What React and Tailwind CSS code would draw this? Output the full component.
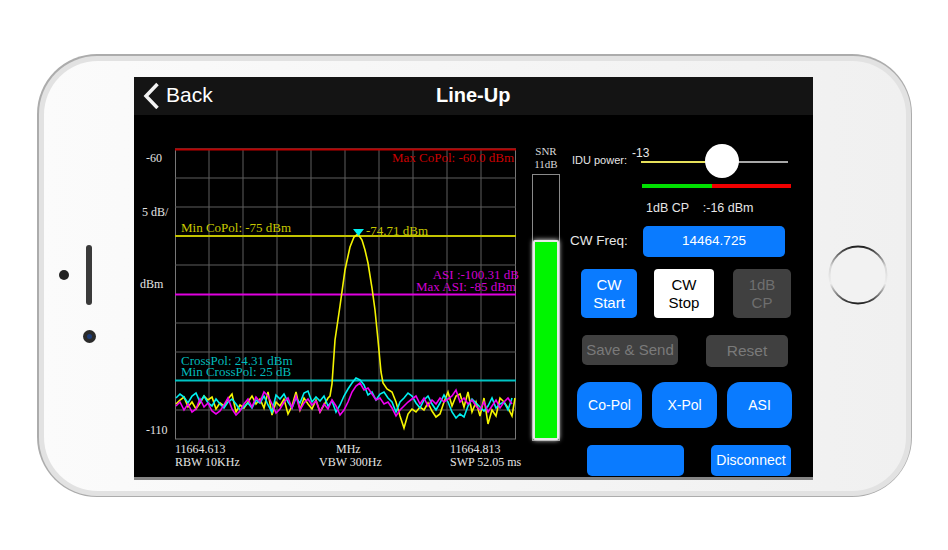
const cyanY = [398,394,397,403,396,393,402,396,403,406,399,404,408,402,399,404,410,407,403,408,400,403,396,405,412,395,399,394,402,408,398,403,393,391,402,397,401,396,406,401,412,405,396,389,383,378,380,385,395,392,400,394,392,398,402,412,402,398,393,396,403,408,400,396,404,410,403,395,402,412,418,414,417,406,399,403,407,411,406,398,408,404,402,410,398];
const magentaY = [406,402,410,404,412,409,399,407,403,411,414,411,405,398,409,415,411,404,399,407,397,402,392,396,404,413,409,402,398,408,396,410,403,399,405,401,412,404,409,400,406,415,410,402,392,386,383,390,388,394,400,398,404,402,408,416,410,406,402,399,396,404,398,406,400,404,398,402,399,396,390,402,398,404,400,406,410,402,412,406,400,408,402,398,404];
const yellowLeft = [[176,404],[180,400],[184,397],[188,407],[192,402],[196,409],[200,403],[204,396],[208,400],[212,397],[216,409],[220,403],[224,406],[228,399],[232,394],[236,412],[240,405],[244,408],[248,402],[252,396],[256,404],[260,399],[264,408],[268,392],[272,415],[276,402],[280,406],[284,399],[288,414],[292,406],[296,392],[300,410],[304,398],[308,404],[312,409],[316,400],[320,412],[324,405],[328,398]];
const yellowLobe = [[330,396],[332,384],[335,340],[340,306],[345,270],[350,247],[354,237],[358,234],[362,240],[365,250],[368,263],[372,288],[375,310],[378,340],[381,372],[383,383],[387,389],[392,392],[396,402]];
const yellowRight = [[400,416],[404,428],[408,414],[412,409],[416,412],[420,407],[424,410],[428,403],[432,411],[436,417],[440,414],[444,402],[448,392],[452,406],[456,396],[460,394],[464,407],[468,392],[472,412],[476,402],[480,416],[484,398],[488,424],[492,410],[496,416],[500,398],[504,402],[508,408],[512,416],[515,398]];

const toPoints = (ys) => ys.map((y, i) => `${176 + i * 4},${y}`).join(' ');
const pairs = (list) => list.map((p) => p.join(',')).join(' ');

const gridX = [209, 243, 277, 311, 345, 379, 413, 447, 481];
const gridY = [178, 207, 265, 323, 352, 410];

function Chart() {
  return (
    <svg viewBox="134 115 398 362" className="w-[398px] h-[362px] shrink-0 font-['Liberation_Serif',serif] text-[12px]">
      <rect x="175.5" y="149" width="340" height="290" fill="none" stroke="#777" />
      {gridX.map((x) => <line key={x} x1={x} x2={x} y1="149" y2="439" stroke="#5e5e5e" />)}
      {gridY.map((y) => <line key={y} x1="175" x2="516" y1={y} y2={y} stroke="#5e5e5e" />)}
      <line x1="175" x2="516" y1="149.5" y2="149.5" stroke="#c00000" strokeWidth="2" />
      <line x1="175" x2="516" y1="236" y2="236" stroke="#c4c400" strokeWidth="2" />
      <line x1="175" x2="516" y1="294.5" y2="294.5" stroke="#e000e0" strokeWidth="2" />
      <line x1="175" x2="516" y1="380.5" y2="380.5" stroke="#00c4c4" strokeWidth="2" />

      <polyline points={pairs([...yellowLeft, ...yellowLobe, ...yellowRight])} fill="none" stroke="#f4f400" strokeWidth="1.600" />
      <polyline points={toPoints(cyanY)} fill="none" stroke="#00f0f0" strokeWidth="1.600" />
      <polyline points={toPoints(magentaY)} fill="none" stroke="#f000f0" strokeWidth="1.600" />
      <polygon points="353,229 364,229 358.500,236" fill="#00f0f0" />

      <g fill="#e4e4e4">
        <text x="146" y="162">-60</text>
        <text x="142" y="216">5 dB/</text>
        <text x="140" y="288">dBm</text>
        <text x="146" y="434">-110</text>
        <text x="175" y="453">11664.613</text>
        <text x="175" y="466">RBW 10KHz</text>
        <text x="336" y="453">MHz</text>
        <text x="319" y="466">VBW 300Hz</text>
        <text x="450" y="453">11664.813</text>
        <text x="450" y="466">SWP 52.05 ms</text>
      </g>
      <g className="text-[13px]">
        <text x="514" y="162" textAnchor="end" fill="#cc0000">Max CoPol: -60.0 dBm</text>
        <text x="181" y="232" fill="#c8c800">Min CoPol: -75 dBm</text>
        <text x="366" y="235" fill="#c8c800">-74.71 dBm</text>
        <text x="519" y="279" textAnchor="end" fill="#d000d0">ASI :-100.31 dB</text>
        <text x="516" y="291" textAnchor="end" fill="#d000d0">Max ASI: -85 dBm</text>
        <text x="181" y="365" fill="#00bcbc">CrossPol: 24.31 dBm</text>
        <text x="181" y="376" fill="#00bcbc">Min CrossPol: 25 dB</text>
      </g>
    </svg>
  );
}

function SnrBar() {
  return (
    <div className="w-[28px] shrink-0 flex flex-col items-center font-['Liberation_Serif',serif] text-[11px] leading-[13px] text-[#d8d8d8]">
      <div className="mt-[30px]">SNR</div>
      <div>11dB</div>
      <div className="mt-[3px] w-[28px] h-[267px] border border-[#8a8a8a] flex flex-col justify-end">
        <div className="h-[200px] bg-[#00f500] border-2 border-[#e8e8e8] rounded-[2px] shadow-[0_0_5px_#ffffff]"></div>
      </div>
    </div>
  );
}

function Controls() {
  return (
    <div className="flex-1 text-[#e6e6e6] relative">
      {/* power slider */}
      <div className="flex mt-[29px] h-[34px]">
        <div className="ml-[6px] w-[69px] pt-[10px] text-[11px] leading-[13px]">IDU power:</div>
        <div className="relative w-[147px]">
          <div className="absolute left-[-9px] top-[3px] text-[12px] leading-[13px]">-13</div>
          <div className="flex mt-[17px] h-[2px]">
            <div className="w-[64px] bg-[#e6e05a]"></div>
            <div className="flex-1 bg-[#a8a8a8]"></div>
          </div>
          <div className="absolute left-[64px] top-0 w-[34px] h-[34px] rounded-full bg-white"></div>
        </div>
      </div>
      <div className="flex ml-[76px] mt-[6px] w-[149px] h-[4px]">
        <div className="w-[70px] bg-[#00e000]"></div>
        <div className="flex-1 bg-[#f00000]"></div>
      </div>
      <div className="ml-[80px] mt-[13px] text-[12.500px] leading-[14px] whitespace-pre">1dB CP    :-16 dBm</div>

      <div className="flex items-center mt-[11px]">
        <div className="ml-[4px] w-[73px] text-[13.500px]">CW Freq:</div>
        <div className="w-[142px] h-[31px] rounded-[5px] bg-[#0a7bff] flex items-center justify-center text-[13.500px] text-white">14464.725</div>
      </div>

      <div className="flex mt-[12px] ml-[15px] text-[15px] leading-[18px] text-center">
        <div className="w-[56px] h-[49px] rounded-[5px] bg-[#0a7bff] text-white flex items-center justify-center">CW<br />Start</div>
        <div className="ml-[17px] w-[60px] h-[49px] rounded-[4px] bg-white text-black flex items-center justify-center">CW<br />Stop</div>
        <div className="ml-[19px] w-[58px] h-[49px] rounded-[5px] bg-[#404040] text-[#6f6f6f] flex items-center justify-center">1dB<br />CP</div>
      </div>

      <div className="flex mt-[17px] ml-[16px] text-[15px] text-[#7a7a7a]">
        <div className="w-[96px] h-[30px] rounded-[5px] bg-[#404040] flex items-center justify-center">Save &amp; Send</div>
        <div className="ml-[28px] w-[82px] h-[32px] rounded-[5px] bg-[#404040] flex items-center justify-center text-[15.500px]">Reset</div>
      </div>

      <div className="flex mt-[15px] ml-[11px] gap-[10px] text-[14px] text-white">
        <div className="w-[65px] h-[46px] rounded-[13px] bg-[#0a7bff] flex items-center justify-center">Co-Pol</div>
        <div className="w-[65px] h-[46px] rounded-[13px] bg-[#0a7bff] flex items-center justify-center">X-Pol</div>
        <div className="w-[65px] h-[46px] rounded-[13px] bg-[#0a7bff] flex items-center justify-center">ASI</div>
      </div>

      <div className="flex mt-[17px] ml-[21px]">
        <div className="w-[97px] h-[31px] rounded-[5px] bg-[#0a7bff]"></div>
        <div className="ml-[27px] w-[80px] h-[31px] rounded-[5px] bg-[#0a7bff] flex items-center justify-center text-[14px] text-white">Disconnect</div>
      </div>
    </div>
  );
}

function Screen() {
  return (
    <div className="w-[679px] h-[403px] shrink-0 bg-black border-b-[3px] border-[#858585] font-['Liberation_Sans',sans-serif] flex flex-col">
      <div className="h-[38px] bg-[#141414] flex items-center relative text-white">
        <svg width="18" height="28" viewBox="0 0 18 28" className="ml-[9px] mt-[-2px]">
          <path d="M14.500 3 L3 15 L14.500 27" fill="none" stroke="#f2f2f2" strokeWidth="3.500" />
        </svg>
        <span className="ml-[5px] mt-[-3px] text-[21px]">Back</span>
        <span className="absolute left-[302px] top-[3px] text-[20px] font-bold">Line-Up</span>
      </div>
      <div className="flex flex-1">
        <Chart />
        <SnrBar />
        <div className="w-[6px]"></div>
        <Controls />
      </div>
    </div>
  );
}

export default function App() {
  return (
    <div className="w-[948px] h-[550px] bg-white overflow-hidden pt-[54px] pl-[37px]">
      <div className="w-[875px] h-[443px] rounded-[60px] bg-[#acacac] p-[1.500px]">
        <div className="h-full rounded-[58px] bg-[#e2e2e2] p-[5px]">
          <div className="h-full rounded-[54px] bg-gradient-to-r from-[#fbfbfb] to-[#f0f0f0] flex pt-[16.500px]">
            {/* left bezel */}
            <div className="w-[90.500px] shrink-0 pt-[168px]">
              <div className="flex items-center pl-[15px]">
                <div className="w-[10px] h-[10px] rounded-full bg-[#222]"></div>
                <div className="ml-[17px] w-[6px] h-[60px] rounded-full bg-[#3a3a3a]"></div>
              </div>
              <div className="ml-[39px] mt-[25px] w-[13px] h-[13px] rounded-full bg-[#2a2a2a] flex items-center justify-center">
                <div className="w-[5px] h-[5px] rounded-full bg-[#1d3c78]"></div>
              </div>
            </div>
            <Screen />
            {/* right bezel */}
            <div className="flex-1 flex justify-center pt-[168px] pr-[2px]">
              <svg width="60" height="60" viewBox="0 0 60 60">
                <defs>
                  <linearGradient id="homeRing" x1="0" y1="0" x2="0" y2="1">
                    <stop offset="0" stopColor="#222" />
                    <stop offset="0.35" stopColor="#d8d8d8" />
                    <stop offset="0.65" stopColor="#eee" />
                    <stop offset="1" stopColor="#222" />
                  </linearGradient>
                </defs>
                <circle cx="30" cy="30" r="28.500" fill="#f2f2f2" stroke="url(#homeRing)" strokeWidth="2" />
              </svg>
            </div>
          </div>
        </div>
      </div>
    </div>
  );
}
